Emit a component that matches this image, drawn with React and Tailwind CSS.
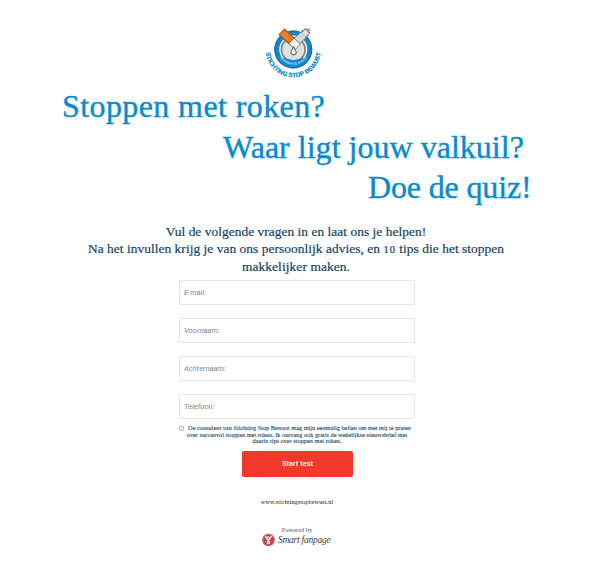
const serif = "font-['Liberation_Serif',serif]";
const sans = "font-[Roboto,sans-serif]";

function Logo() {
  return (
    <svg className="block overflow-visible" width="66" height="60" viewBox="0 0 66 60">
      <defs>
        <path id="ring" d="M5.6 27.5 A27.7 27.7 0 0 0 61 27.5" />
        <path id="inner" d="M17.3 30 A16.4 16.4 0 0 0 49.3 30" />
      </defs>
      <circle cx="33.3" cy="27.5" r="19" fill="#1488cc" />
      <circle cx="33.3" cy="27.5" r="18.4" fill="none" stroke="#1c6596" strokeWidth="1" />
      <circle cx="33.3" cy="27.5" r="14" fill="#fff" />
      <circle cx="33.3" cy="27.5" r="12.7" fill="#7d8083" />
      <circle cx="33.3" cy="27.5" r="11" fill="#dfe0e1" />
      <path d="M17 33 Q33.3 42 49.6 33 Q46 44.5 33.3 44.8 Q20 44.5 17 33Z" fill="#1488cc" />
      <circle cx="33.3" cy="28" r="10" fill="#dfe0e1" />
      <path d="M32 23.5 L46 10.5" stroke="#77797b" strokeWidth="8.4" />
      <path d="M32 23.5 L46 10.5" stroke="#d7d8d9" strokeWidth="6.8" />
      <path d="M43.5 12.8 L48 8.6" stroke="#555759" strokeWidth="6.8" />
      <path d="M43.5 12.8 L47.4 9.2" stroke="#e1e2e3" strokeWidth="5.4" />
      <path d="M47.4 9.2 L49.6 7.1" stroke="#999b9d" strokeWidth="3.4" />
      <path d="M22 10 L38 25" stroke="#77716b" strokeWidth="8.2" />
      <path d="M21.4 9.5 L31.6 19.1" stroke="#a74d12" strokeWidth="8.6" />
      <path d="M22.1 10.1 L31 18.5" stroke="#e67e2c" strokeWidth="6.6" />
      <path d="M31.6 19.1 L37.6 24.6" stroke="#f1f1f1" strokeWidth="6.8" />
      <path d="M33.6 24.8 C32.5 27.3 31 28.6 31 30.3 A2.6 2.6 0 0 0 36.2 30.3 C36.2 28.6 34.6 27.3 33.6 24.8Z" fill="#fff" stroke="#65676a" strokeWidth="1.1" />
      <text className="font-['Liberation_Sans',sans-serif]" fontSize="3.3" fontWeight="700" fill="#b4dcf3" textAnchor="middle">
        <textPath href="#inner" startOffset="50%">INFORMATIE AVOND</textPath>
      </text>
      <text className="font-['Liberation_Sans',sans-serif]" fontSize="6.2" fontWeight="700" fill="#078bce" stroke="#078bce" strokeWidth=".2" textAnchor="middle">
        <textPath href="#ring" startOffset="50%">STICHTING STOP BEWUST</textPath>
      </text>
    </svg>
  );
}

function Badge() {
  return (
    <svg className="block shrink-0" width="15" height="14" viewBox="0 0 15 14">
      <circle cx="7.5" cy="7" r="6.2" fill="#b8474d" />
      <circle cx="7.5" cy="7" r="5.5" fill="none" stroke="#cf7a7e" strokeWidth=".6" />
      <path d="M4.3 3.5 L6 5.5 L7.5 7 L10.7 3.2 M5.8 4 L8.4 4 M7.5 7 C5.5 9 6.4 11 8 10.6 C9.2 10 8.6 8.5 7.5 8.2" fill="none" stroke="#fff" strokeWidth="1.2" />
    </svg>
  );
}

const fields = ["E-mail:", "Voornaam:", "Achternaam:", "Telefoon:"];

export default function App() {
  return (
    <main className={`h-[569px] w-[608px] overflow-hidden bg-white ${serif}`}>
      <header className="pt-[22px]">
        <div className="ml-[260px] h-[64px]">
          <Logo />
        </div>
        <h1 className="whitespace-nowrap text-[32px] leading-[40.5px] text-[#078bd0] [-webkit-text-stroke:0.4px_#078bd0]">
          <span className="ml-[62px] block tracking-[0.4px]">Stoppen met roken?</span>
          <span className="ml-[223px] block tracking-[0.02px]">Waar ligt jouw valkuil?</span>
          <span className="ml-[368px] block tracking-[-0.15px]">Doe de quiz!</span>
        </h1>
      </header>
      <div className="mt-[15.5px] w-[592px] whitespace-nowrap text-center text-[13.4px] leading-[17px] text-[#123f61] [-webkit-text-stroke:0.2px_#123f61]">
        <p className="tracking-[0.04px]">Vul de volgende vragen in en laat ons je helpen!</p>
        <p className="tracking-[0.05px]">
          Na het invullen krijg je van ons persoonlijk advies, en <span className="text-[10.5px] tracking-[1px]">10</span> tips die het stoppen
        </p>
        <p className="tracking-[0.1px]">makkelijker maken.</p>
      </div>
      <form className="ml-[179px] mt-[4.5px] w-[236px]">
        <div className="flex flex-col gap-[13px]">
          {fields.map((label) => (
            <input
              key={label}
              placeholder={label}
              aria-label={label}
              className={`block h-[25px] w-full rounded-[1px] border border-[#e6e6e6] bg-white px-1 text-[7.6px] italic placeholder:text-[#858585] placeholder:opacity-100 ${sans}`}
            />
          ))}
        </div>
        <label className="mt-[6.5px] flex h-[20px] whitespace-nowrap text-center text-[6.3px] leading-[6.5px] text-[#244e65] [-webkit-text-stroke:0.12px_#244e65]">
          <input type="checkbox" className="m-0 mt-px size-[5px] shrink-0 appearance-none rounded-[1px] border border-[#b9bcc0] bg-[#f2f2f2]" />
          <span className="block w-[231px]">
            <span className="block">De consulent van Stichting Stop Bewust mag mijn eenmalig bellen om met mij te praten</span>
            <span className="block pr-[5px]">over succesvol stoppen met roken. Ik ontvang ook gratis de wekelijkse nieuwsbrief met</span>
            <span className="block pr-[5px]">daarin tips over stoppen met roken.</span>
          </span>
        </label>
        <button type="button" className={`ml-[63px] mt-[5.5px] block h-[26px] w-[111px] rounded-[2px] bg-[#f1382b] text-[7.5px] font-medium text-white ${sans}`}>
          Start test
        </button>
      </form>
      <footer className="w-[594px] text-center">
        <p className="mt-[21px] text-[6.4px] leading-[8px] text-[#222]">www.stichtingstopbewust.nl</p>
        <p className="mt-[20px] text-[6.4px] leading-[8px] text-[#555]">Powered by</p>
        <div className="-mt-px ml-[261px] flex h-[14px] items-center gap-[2px]">
          <Badge />
          <span className="whitespace-nowrap text-[9.5px] italic leading-[14px] tracking-[-0.25px] text-[#413b3d]">Smart fanpage</span>
        </div>
      </footer>
    </main>
  );
}
